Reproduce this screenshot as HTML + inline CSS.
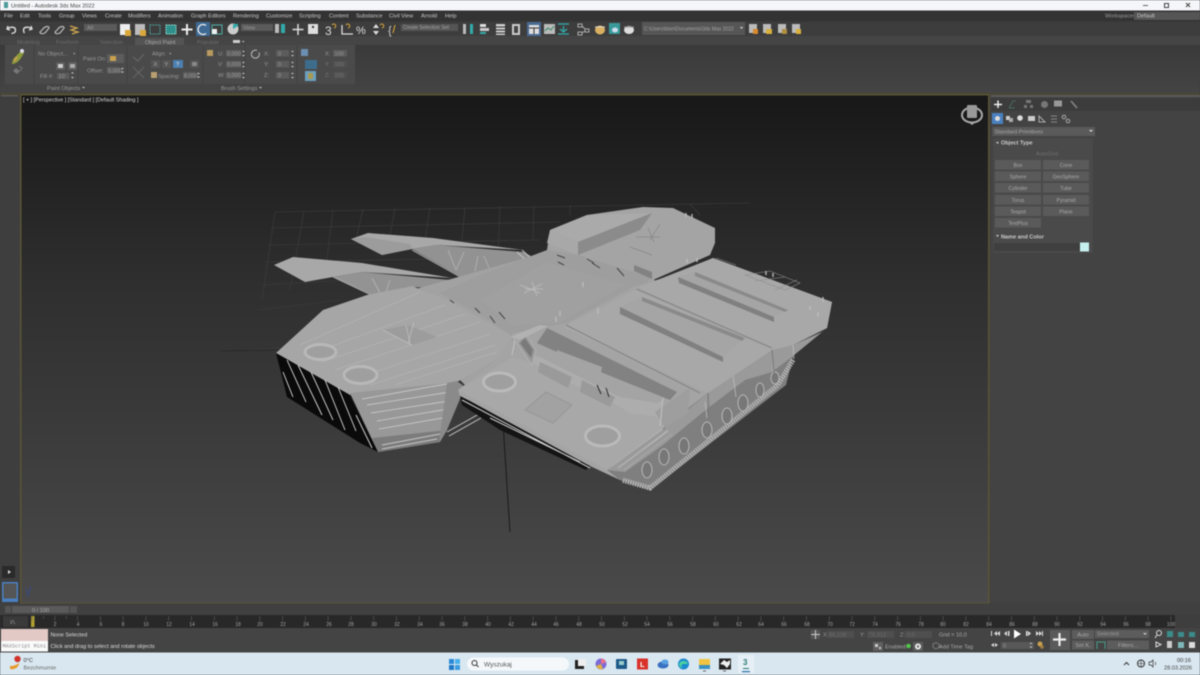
<!DOCTYPE html>
<html><head><meta charset="utf-8"><title>Untitled - Autodesk 3ds Max 2022</title>
<style>
html,body{margin:0;padding:0;width:1200px;height:675px;overflow:hidden;background:#3d3d3d}
svg{display:block;filter:blur(.45px)}
text{font-family:"Liberation Sans",sans-serif;font-size:5.6px;fill:#c8c8c8}
.d{fill:#9a9a9a}.w{fill:#8a8a8a}.t{fill:#a4a4a4;font-size:5px}
.btn{fill:#5a5a5a}.inp{fill:#585858}
.pb text{text-anchor:middle;fill:#aaa;font-size:5.2px}
</style></head><body>
<svg width="1200" height="675" viewBox="0 0 1200 675" xmlns="http://www.w3.org/2000/svg">
<defs>
<linearGradient id="vp" x1="0" y1="0" x2="0" y2="1"><stop offset="0" stop-color="#181818"/><stop offset=".35" stop-color="#2e2e2e"/><stop offset="1" stop-color="#4a4a4a"/></linearGradient>
<linearGradient id="rb" x1="0" y1="0" x2="0" y2="1"><stop offset="0" stop-color="#3a3a3a"/><stop offset="1" stop-color="#444"/></linearGradient>
</defs>
<!-- chrome -->
<rect width="1200" height="675" fill="#3e3e3e"/>
<rect width="1200" height="10.500" fill="#f4f6f9"/>
<rect y="10.500" width="1200" height="11" fill="#333"/>
<rect y="22" width="1200" height="15" fill="#3d3d3d"/>
<rect y="36" width="1200" height="9" fill="#454545"/>
<rect y="45" width="1200" height="48" fill="url(#rb)"/>
<rect y="93" width="1200" height="2" fill="#4a4632"/>
<!-- title -->
<rect x="4" y="2" width="4" height="6" fill="#4d9a9a"/>
<text x="11" y="7.500" style="font-size:5.600px;fill:#444">Untitled - Autodesk 3ds Max 2022</text>
<path d="M1143 5.500h5" stroke="#666" fill="none"/><rect x="1164.500" y="3.500" width="4" height="4" stroke="#444" fill="none"/><path d="M1186 3l4 4M1190 3l-4 4" stroke="#444" fill="none"/>
<!-- menu -->
<g>
<text x="4" y="17.500">File</text><text x="20" y="17.500">Edit</text><text x="38" y="17.500">Tools</text><text x="59" y="17.500">Group</text><text x="82" y="17.500">Views</text><text x="105" y="17.500">Create</text><text x="128" y="17.500">Modifiers</text><text x="158" y="17.500">Animation</text><text x="191" y="17.500">Graph Editors</text><text x="233" y="17.500">Rendering</text><text x="266" y="17.500">Customize</text><text x="299" y="17.500">Scripting</text><text x="329" y="17.500">Content</text><text x="356" y="17.500">Substance</text><text x="389" y="17.500">Civil View</text><text x="421" y="17.500">Arnold</text><text x="445" y="17.500">Help</text>
<text x="1105" y="17.500" class="d">Workspaces:</text><rect x="1134" y="12" width="66" height="8" fill="#555"/><text x="1137" y="17.500">Default</text>
</g>
<!-- toolbar -->
<g fill="none" stroke="#ddd" stroke-width="1.200">
<path d="M8 26l-1 3 3 1M7.500 29c3-3 8-2 8 1s-2 3-4 3.500" stroke-width="1.400"/><path d="M31 26l1 3-3 1M31.500 29c-3-3-8-2-8 1 0 1 0 2 1 3" stroke-width="1.400"/>
<path d="M40 32l3-3c1-2 6-4 6-1l-4 5c-2 1-5 1-5-1z" stroke="#bbb"/><path d="M55 32l3-3c1-2 6-4 6-1l-4 5c-2 1-5 1-5-1z" stroke="#bbb"/>
<path d="M70 26l7 2-6 2 7 2-6 2" stroke="#d0a850"/>
</g>
<rect x="84" y="24" width="33" height="7" fill="#5b5b5b"/><text x="87" y="29.500" class="d">All</text>
<rect x="120" y="24" width="10" height="11" fill="#eee"/><rect x="125" y="30" width="6" height="6" fill="#d9a83c"/>
<rect x="135" y="24" width="10" height="11" fill="#bbb"/><rect x="140" y="30" width="6" height="6" fill="#d9a83c"/>
<rect x="150" y="25" width="10" height="9" fill="none" stroke="#4fb0a8" stroke-dasharray="1.500 1"/>
<rect x="166" y="25" width="10" height="9" fill="#2f8f8a" stroke="#9ed" stroke-dasharray="1.500 1"/>
<path d="M187 24v11M181.500 29.500h11" stroke="#eee" stroke-width="2"/>
<rect x="196" y="22" width="14" height="14" rx="1" fill="#3f6a94"/><path d="M206 25.500a5 5 0 1 0 0 8" stroke="#eee" fill="none" stroke-width="1.300"/>
<rect x="212" y="25" width="10" height="9" fill="none" stroke="#4fb0a8"/><rect x="212" y="29" width="5" height="5" fill="#eee"/>
<circle cx="233" cy="29" r="5.500" fill="#ccc"/><path d="M233 29l5-3v-2l-5 0z" fill="#3aa"/>
<rect x="241" y="24" width="32" height="7" fill="#5b5b5b"/><text x="243" y="29.500" class="d">View</text>
<rect x="275" y="24" width="4" height="9" fill="#bbb"/><rect x="281" y="24" width="4" height="9" fill="#3aa"/>
<path d="M298 24v11M292.500 29.500h11" stroke="#ddd" stroke-width="1.500"/>
<rect x="308" y="24" width="10" height="10" fill="#ddd"/><rect x="312" y="26" width="2" height="2" fill="#333"/>
<text x="325" y="35" style="font-size:12px;fill:#ddd">3</text><path d="M332 25a2 2 0 1 1 2 3" stroke="#d9a83c" fill="none"/>
<path d="M342 25v9h11" stroke="#ddd" fill="none" stroke-width="1.300"/><path d="M346 25a2 2 0 1 1 2 3" stroke="#d9a83c" fill="none"/>
<text x="356" y="34" style="font-size:11px;fill:#ddd">%</text><path d="M376 24l3 4h-6zM376 35l3-4h-6z" fill="#ddd"/><path d="M380 25a2 2 0 1 1 2 3" stroke="#d9a83c" fill="none"/>
<text x="388" y="34" style="font-size:11px;fill:#ccc">{</text><path d="M395 25l-2 8" stroke="#d9a83c" fill="none"/>
<rect x="401" y="24" width="57" height="7" fill="#555"/><text x="403" y="29" class="t">Create Selection Set</text>
<rect x="463" y="24" width="3" height="10" fill="#bbb"/><rect x="470" y="24" width="3" height="10" fill="#3aa"/>
<rect x="480" y="24" width="6" height="3" fill="#ddd"/><rect x="480" y="28" width="9" height="3" fill="#ccc"/><rect x="480" y="32" width="6" height="2" fill="#3aa"/>
<rect x="496" y="24" width="9" height="11" fill="#ccc"/><path d="M496 27h9M496 30h9M496 33h9" stroke="#333"/>
<rect x="512" y="24" width="8" height="11" fill="#ccc"/><rect x="514" y="26" width="4" height="7" fill="#444"/>
<rect x="527" y="22" width="14" height="14" fill="#4a6a94"/><rect x="529" y="25" width="10" height="9" fill="#ddd"/><path d="M529 28h10M534 28v6" stroke="#333"/>
<rect x="544" y="24" width="11" height="10" fill="#bbb"/><path d="M545 31l3-3 3 2 3-4" stroke="#386" fill="none"/>
<path d="M558 24h11M563.500 26v6M560 29l3.500 3 3.500-3M558 34h11" stroke="#3aa" fill="none" stroke-width="1.300"/>
<g fill="none" stroke="#aaa"><rect x="578" y="24" width="4" height="3"/><rect x="585" y="29" width="4" height="3"/><rect x="578" y="32" width="4" height="3"/><path d="M582 26l3 3M582 33l3-2"/></g>
<ellipse cx="600" cy="30" rx="5" ry="4.500" fill="#d9b060"/><path d="M595 27h10" stroke="#ddd"/>
<rect x="609" y="23" width="11" height="11" fill="#3a9a9a"/><ellipse cx="615" cy="30" rx="3" ry="2.500" fill="#cde"/>
<ellipse cx="629" cy="30" rx="5" ry="4" fill="#ddd"/><path d="M624 27h10" stroke="#999"/>
<rect x="642" y="22" width="103" height="13" fill="#565656"/><text x="644" y="30.500" class="t">C:\Users\bion\Documents\3ds Max 2022</text><path d="M740 27h3l-1.500 2z" fill="#ddd"/>
<g><rect x="749" y="24" width="8" height="9" fill="#bbb"/><rect x="753" y="29" width="5" height="5" fill="#d98a2c"/><rect x="763" y="24" width="8" height="9" fill="#bbb"/><rect x="766" y="29" width="6" height="5" fill="#d9b03c"/><rect x="778" y="24" width="8" height="9" fill="#bbb"/><rect x="782" y="29" width="5" height="5" fill="#b09040"/><rect x="792" y="24" width="8" height="9" fill="#bbb"/><rect x="796" y="29" width="5" height="5" fill="#d9b03c"/></g>
<!-- tabs -->
<rect x="135" y="38" width="49" height="7" fill="#545454"/>
<g class="t" style="fill:#777"><text x="17" y="44" style="fill:#6e6e6e">Modeling</text><text x="56" y="44" style="fill:#6e6e6e">Freeform</text><text x="100" y="44" style="fill:#6e6e6e">Selection</text><text x="145" y="44" style="fill:#aaa">Object Paint</text><text x="197" y="44" style="fill:#6e6e6e">Populate</text></g>
<rect x="233" y="40" width="7" height="3" fill="#ccc"/><path d="M242 41h2.500l-1.200 1.500z" fill="#ccc"/>
<!-- ribbon panel -->
<rect x="5" y="45" width="350" height="47" fill="#4a4a4a"/>
<rect x="5" y="84" width="350" height="8" fill="#434343"/>
<path d="M34 46v38M78 46v38M127 46v38M203 46v38M245 46v38M297 46v38" stroke="#3d3d3d" stroke-width=".7"/>
<path d="M22 50l-7 7c-2 2-3 5-3 7 4 0 7-3 9-6l3-5z" fill="#8c9a3c"/><path d="M17 57l-3 4" stroke="#c8a050" stroke-width="2"/><circle cx="22" cy="51" r="2" fill="#dde"/>
<path d="M13 71l3-3 4 3-3 3z" fill="#777"/><path d="M19 66l3 2-2 3" stroke="#777" fill="none"/>
<text x="38" y="55.500" class="d">No Object...</text><path d="M73 53h2.500l-1.200 1.500z" fill="#aaa"/>
<rect x="56" y="62" width="9" height="8" fill="#5c5c5c"/><rect x="68" y="62" width="9" height="8" fill="#5c5c5c"/><rect x="58" y="64" width="5" height="4" fill="#ccc"/><rect x="70" y="64" width="5" height="4" fill="#aaa"/>
<text x="40" y="78" class="d">Fill #:</text><rect x="57" y="73" width="12" height="6" fill="#5c5c5c"/><text x="58.500" y="78" class="d">10</text><path d="M71 73.500h3l-1.500-1.500zM71 77h3l-1.500 1.500z" fill="#ccc"/>
<text x="83" y="60.500" class="d">Paint On:</text><rect x="107" y="54" width="17" height="9" fill="#5c5c5c"/><rect x="110" y="56" width="6" height="5" fill="#c8a050"/>
<text x="87" y="72.500" class="d">Offset:</text><rect x="107" y="67" width="13" height="6.500" fill="#5c5c5c"/><text x="108" y="72.500" class="d">0,000</text><path d="M121 69h3l-1.500-1.500zM121 71.500h3l-1.500 1.500z" fill="#ccc"/>
<path d="M133 57l5 4 6-7" stroke="#666" fill="none" stroke-width="1.200"/><path d="M133 67l11 11M144 67l-11 11" stroke="#666" stroke-width="1"/>
<text x="152" y="55.500" class="d">Align:</text><path d="M169 53h2.500l-1.200 1.500z" fill="#aaa"/>
<rect x="151" y="60" width="9" height="8" fill="#555"/><rect x="162" y="60" width="9" height="8" fill="#555"/><rect x="173" y="60" width="10" height="8" fill="#4d80b0"/><rect x="190" y="60" width="9" height="8" fill="#555"/>
<text x="153.500" y="66" style="fill:#aaa">X</text><text x="164.500" y="66" style="fill:#aaa">Y</text><text x="176" y="66" style="fill:#eee">?</text><rect x="192" y="62" width="5" height="4" fill="#888"/>
<rect x="151" y="72" width="6" height="6" fill="#b8a070"/><text x="158" y="78" class="d">Spacing:</text><rect x="183" y="72" width="13" height="6.500" fill="#5c5c5c"/><text x="184" y="77.500" class="d">8,000</text><path d="M197 74h3l-1.500-1.500zM197 76.500h3l-1.500 1.500z" fill="#ccc"/>
<g class="d">
<rect x="207" y="50" width="6" height="6" fill="#b89a60"/>
<text x="218" y="55.500" class="d">U:</text><rect x="226" y="50" width="15" height="6.500" fill="#5c5c5c"/><text x="227" y="55.500" class="d">0,000</text>
<text x="218" y="66" class="d">V:</text><rect x="226" y="61" width="15" height="6.500" fill="#5c5c5c"/><text x="227" y="66" class="d">0,000</text>
<text x="218" y="77" class="d">W:</text><rect x="226" y="72" width="15" height="6.500" fill="#5c5c5c"/><text x="227" y="77" class="d">0,000</text>
<path d="M242 52h3l-1.500-1.500zM242 55h3l-1.500 1.500zM242 63h3l-1.500-1.500zM242 66h3l-1.500 1.500zM242 74h3l-1.500-1.500zM242 77h3l-1.500 1.500z" fill="#ccc"/>
<path d="M257 50.500a4 4 0 1 0 2 2" stroke="#bbb" fill="none"/>
<text x="264" y="55.500" class="d">X:</text><rect x="276" y="50" width="13" height="6.500" fill="#5c5c5c"/><text x="278" y="55.500" class="d">0</text>
<text x="264" y="66" class="d">Y:</text><rect x="276" y="61" width="13" height="6.500" fill="#5c5c5c"/><text x="278" y="66" class="d">0</text>
<text x="264" y="77" class="d">Z:</text><rect x="276" y="72" width="13" height="6.500" fill="#5c5c5c"/><text x="278" y="77" class="d">0</text>
<path d="M291 52h3l-1.500-1.500zM291 55h3l-1.500 1.500zM291 63h3l-1.500-1.500zM291 66h3l-1.500 1.500zM291 74h3l-1.500-1.500zM291 77h3l-1.500 1.500z" fill="#ccc"/>
<rect x="301" y="49" width="7" height="7" fill="#6b8fb0"/><rect x="305" y="60" width="12" height="9" fill="#3d6c8c"/><rect x="305" y="71" width="11" height="10" fill="#6b9fc0"/><rect x="308" y="73" width="5" height="6" fill="#a89a50"/>
<text x="325" y="55.500" class="d">X:</text><rect x="333" y="50" width="14" height="6.500" fill="#5c5c5c"/><text x="334.500" y="55.500" class="d">100</text>
<text x="325" y="66" class="d" style="fill:#777">Y:</text><rect x="333" y="61" width="14" height="6.500" fill="#505050"/><text x="334.500" y="66" style="fill:#777">100</text>
<text x="325" y="77" class="d" style="fill:#777">Z:</text><rect x="333" y="72" width="14" height="6.500" fill="#505050"/><text x="334.500" y="77" style="fill:#777">100</text>
</g>
<text x="47" y="90" class="d">Paint Objects</text><path d="M82 87h3l-1.500 1.500z" fill="#ccc"/>
<text x="221" y="90" class="d">Brush Settings</text><path d="M259 87h3l-1.500 1.500z" fill="#ccc"/>
<!-- left bar -->
<rect x="0" y="95" width="20" height="508" fill="#3e3e3e"/><rect x="1" y="95" width="17" height="1.500" fill="#5a5a5a"/>
<rect x="2" y="566" width="13" height="12" fill="#2a2a2a"/><path d="M8 570l3 2-3 2z" fill="#ddd"/>
<rect x="2" y="582" width="16" height="20" fill="#4a80c0"/><rect x="3.500" y="583.500" width="13" height="15" fill="#555"/>
<!-- viewport -->
<rect x="20" y="94" width="969.500" height="509.500" fill="#5a5436"/>
<rect x="21.500" y="95.500" width="966.500" height="507" fill="url(#vp)"/>
<text x="23" y="101.500" style="font-size:5.400px;fill:#ddd">[ + ] [Perspective ] [Standard ] [Default Shading ]</text>
<path d="M26 588l2 8M31 586l-3 10" stroke="#3a4a80" fill="none"/>
<!-- grid -->
<g stroke="#3f3f3f" stroke-width=".6" fill="none">
<path d="M275 212L750 203M271 228L560 222M268 245L540 240M265 262L500 258M262 285L350 280M258 310L340 300M250 350L280 348"/>
<path d="M275 212L262 300M304 211L290 290M333 210L325 275M363 209L356 240M395 208L390 235M430 207L425 240M465 207L462 240M500 206L498 260M534 206L533 240M570 205L570 215M690 204L700 215"/>
</g>
<path d="M503 423L510 532" stroke="#111" stroke-width=".8"/>
<path d="M220 351L280 350" stroke="#222" stroke-width=".6"/>
<!-- viewcube -->
<ellipse cx="972" cy="115" rx="10" ry="7.500" fill="none" stroke="#aaa" stroke-width="2"/>
<rect x="967" y="105" width="10" height="13" rx="1" fill="#999"/>
<path d="M970 123.500l2 1.500 2-1.500z" fill="#aaa"/>
<!-- MODEL -->
<!-- wing rear -->
<polygon points="412,249 437,245 523,252 535,258 530,270 493,272 473,278 463,278" fill="#929292"/>
<polygon points="351,239 368,233 433,238 523,250 437,245 412,249 382,255" fill="#a8a8a8"/>
<polygon points="351,239 382,255 412,249 410,244 365,237" fill="#9c9c9c"/>
<path d="M448 250l8 20M456 270l8-18M478 256l-3 15M484 256l6 14M412 250l50 28" stroke="#b2b2b2" stroke-width=".9" fill="none"/>
<!-- wing front -->
<polygon points="333,277 362,272 450,280 470,280 448,288 407,287 372,295" fill="#939393"/>
<polygon points="274,265 293,257 362,263 452,278 362,272 333,277 305,282" fill="#a8a8a8"/>
<path d="M372 278l8 15M390 280l-4 12M333,277l38 18" stroke="#b2b2b2" stroke-width=".9" fill="none"/>
<path d="M452 279l10 8M447 280l10 8M522 250l10 9M517 252l10 9" stroke="#c5c5c5" stroke-width="1" fill="none"/>
<!-- interior base fills gaps between parts -->
<polygon points="412,290 547,252 653,275 660,300 560,345 510,375 470,390 440,360" fill="#a2a2a2"/>
<!-- rear plate -->
<polygon points="547,250 550,230 587,215 643,207 673,208 715,228 715,243 710,255 653,280 600,290" fill="#a4a4a4"/>
<polygon points="550,230 587,215 651,213 578,242" fill="#aaaaaa"/>
<polygon points="578,242 652,213 640,230 578,255" fill="#8b8b8b"/>
<polygon points="550,230 578,242 578,255 547,243" fill="#a8a8a8"/>
<path d="M648 228l6 14M660 224l-10 16M636 237h24M630 247l22 8" stroke="#858585" stroke-width=".7" fill="none"/>
<!-- center deck -->
<polygon points="440,293 473,278 547,250 578,255 653,278 600,310 563,327 513,340 490,320" fill="#9e9e9e"/>
<polygon points="480,300 547,262 625,285 560,322 513,325" fill="#a0a0a0"/>
<path d="M520 285l20 8M524 293l18-9M532 282l5 14M525 289h18" stroke="#bdbdbd" stroke-width=".8" fill="none"/>
<path d="M557 255l8 3M558 262l6 3M587 259l7 4M592 263l8 5M617 268l7 8M450 300l4 3M475 308l5 5M490 316l5 7M499 312l6 7" stroke="#444" stroke-width="1" fill="none"/>
<polygon points="634,265 652,272 652,279 634,271" fill="#828282"/>
<!-- left hull -->
<polygon points="276,353 323,310 367,295 412,286 447,300 508,333 520,345 490,363 457,382 350,395" fill="#a6a6a6"/>
<g stroke="#b4b4b4" stroke-width=".7" fill="none">
<path d="M300 345L420 292M310 354L445 305M322 362L465 314M335 370L480 322M350 380L490 334M370 385L495 345M395 385L497 352"/>
</g>
<polygon points="383,330 408,325 437,337 412,345" fill="#9c9c9c"/>
<path d="M406 325l4 18M414 322l-6 22M383 330l29 15" stroke="#bdbdbd" stroke-width=".8" fill="none"/>
<polygon points="350,393 457,382 447,430 440,442 378,452" fill="#989898"/>
<polygon points="378,452 440,442 447,430 372,438" fill="#7c7c7c"/>
<path d="M362 399L452 383M367 405L450 392M371 413L449 401M377 421L448 409M379 429L448 417M382 445L440 434M382 449L437 439" stroke="#c6c6c6" stroke-width=".9" fill="none"/>
<polygon points="276,353 350,395 378,452 360,443 287,397" fill="#0a0a0a"/>
<path d="M287 360l19 42M298 365l24 50M311 372l22 48M325 380l20 50M338 387l18 44M356 415l16 33M283 372l10 25" stroke="#d8d8d8" stroke-width=".9" fill="none"/>
<ellipse cx="320.500" cy="352" rx="15.500" ry="7.500" fill="#9f9f9f" stroke="#b8b8b8" stroke-width="3"/>
<ellipse cx="360.500" cy="375" rx="16.500" ry="8.500" fill="#9f9f9f" stroke="#b8b8b8" stroke-width="3"/>
<path d="M447 383l10-2 8 6 -18 43-8 12z" fill="#8a8a8a"/>
<path d="M447 432l32-18M449 436l32-18" stroke="#c8c8c8" stroke-width="1" fill="none"/>
<!-- tank silhouette base -->
<polygon points="458,390 497,360 513,333 567,323 633,287 683,272 713,258 832,302 827,328 793,345 793,357 783,387 650,490 620,480 590,466 500,423 460,397" fill="#a4a4a4"/>
<!-- tank tracks -->
<polygon points="607,470 708,393 772,350 793,357 786,385 650,490 620,480" fill="#7f7f7f"/>
<path d="M793 360L778 385 650 488 622 480" stroke="#b4b4b4" stroke-width="5" stroke-dasharray="1.500 1" fill="none"/>
<g fill="#777" stroke="#b6b6b6" stroke-width="1"><ellipse cx="647" cy="470" rx="5" ry="8"/><ellipse cx="664" cy="457" rx="5" ry="8"/><ellipse cx="684" cy="446" rx="5" ry="8"/><ellipse cx="707" cy="430" rx="5" ry="8"/><ellipse cx="727" cy="416" rx="5" ry="8"/><ellipse cx="743" cy="403" rx="5" ry="8"/><ellipse cx="760" cy="390" rx="4" ry="7"/><ellipse cx="775" cy="378" rx="4" ry="6"/></g>
<!-- tank underside -->
<polygon points="460,396 470,401 590,466 586,470 500,430 462,405" fill="#141414"/>
<path d="M462 400l128 68M490 418l90 44" stroke="#ccc" stroke-width="1" fill="none"/>
<!-- side armour -->
<polygon points="607,470 663,430 708,393 772,350 793,345 822,332 827,328 793,356 772,372 745,380 708,408 663,445 625,472" fill="#9a9a9a"/>
<path d="M612 465l52-38M618 468l50-37M705 402l2 16M733 375l3 22M772 352l1 20M793 345l1 14" stroke="#bcbcbc" stroke-width=".8" fill="none"/>
<path d="M708 393l1 26M772 350l2 24" stroke="#7a7a7a" stroke-width="1.200" fill="none"/>
<!-- tank decks -->
<polygon points="563,327 635,290 772,350 708,393" fill="#a8a8a8"/>
<polygon points="637,288 713,258 832,302 827,328 793,345 772,350" fill="#a8a8a8"/>
<polygon points="620,307 642,297 745,338 723,357" fill="#a5a5a5"/>
<polygon points="620,307 620,314 723,362 723,357" fill="#808080"/>
<polygon points="642,297 745,338 742,341 642,301" fill="#8a8a8a"/>
<polygon points="678,277 695,272 788,310 774,317" fill="#a5a5a5"/>
<polygon points="678,277 679,283 774,322 774,317" fill="#808080"/>
<polygon points="695,272 788,310 785,312 695,276" fill="#8a8a8a"/>
<path d="M716 258l20 7M755 281l30-4M775 290l22-10M745 275l40 15 15-7-30-12z" fill="none" stroke="#8e8e8e" stroke-width=".6"/>
<path d="M566 325L700 393M637 289L772 348" stroke="#858585" stroke-width="1.100" fill="none"/>
<!-- cockpit -->
<polygon points="547,328 677,392 670,400 603,373 557,352 537,343" fill="#828282"/>
<polygon points="557,350 602,367 600,377 557,357" fill="#a4a4a4"/>
<!-- glacis -->
<polygon points="458,390 513,357 533,363 663,417 663,430 607,470" fill="#a8a8a8"/>
<polygon points="532,355 540,357 620,397 657,403 663,400 658,417 630,413 613,403 570,383 533,363" fill="#adadad"/>
<polygon points="540,362 572,377 568,388 538,372" fill="#9a9a9a"/>
<polygon points="582,380 615,397 610,407 580,392" fill="#9a9a9a"/>
<path d="M597 385l4 9M606 388l3 9" stroke="#2a2a2a" fill="none"/>
<polygon points="517,343 525,333 536,350 532,365" fill="#9a9a9a" stroke="#b5b5b5" stroke-width=".8"/>
<polygon points="520,343 525,338 533,350 531,358" fill="#7a7a7a"/>
<polygon points="510,337 540,325 548,326 520,340" fill="#b2b2b2"/>
<polygon points="655,412 690,388 688,413 665,428" fill="#9e9e9e"/>
<path d="M663 398l-3 28M515 340l-3 15" stroke="#bdbdbd" stroke-width="1.200" fill="none"/>
<ellipse cx="499.500" cy="382" rx="16" ry="9" fill="#9f9f9f" stroke="#bababa" stroke-width="3"/>
<ellipse cx="602.500" cy="436" rx="17" ry="10" fill="#9f9f9f" stroke="#bababa" stroke-width="3"/>
<polygon points="525,410 546,392 572,405 553,423" fill="#a2a2a2" stroke="#8e8e8e" stroke-width=".6"/>
<path d="M612 466l50-37M618 468l50-38M624 470l48-36" stroke="#bbb" stroke-width=".6" opacity=".7" fill="none"/>
<!-- pins -->
<path d="M686 213v4M692 214v4M687 259v4M697 258v4M766 271v4M773 273v4M818 312v5M810 306v4M823 297v5M583 282v5M560 311v5M598 308v6M556 317v5" stroke="#bdbdbd" stroke-width="1.300" fill="none"/>
<!-- right panel -->
<rect x="990" y="95" width="210" height="508" fill="#434343"/>
<rect x="991" y="95" width="209" height="2" fill="#5a5a5a"/>
<rect x="991" y="98" width="209" height="13" fill="#3c3c3c"/>
<path d="M998 100.500v7.500M994 104.500h8" stroke="#eee" stroke-width="1.500"/>
<path d="M1009 108l4-7h3M1009 108h6" stroke="#4a6a5c" fill="none"/>
<rect x="1026" y="100" width="5" height="3" fill="#777"/><rect x="1024" y="105" width="3" height="3" fill="#777"/><rect x="1030" y="105" width="3" height="3" fill="#777"/>
<circle cx="1044.500" cy="104.500" r="3.500" fill="#777"/><rect x="1054" y="100.500" width="8" height="6" fill="#999"/><path d="M1071 101l6 7" stroke="#888" stroke-width="1.500"/>
<rect x="992" y="113" width="11" height="11" fill="#4a80c0"/><circle cx="997.500" cy="118.500" r="2.500" fill="#ddd"/>
<rect x="1006" y="116" width="4" height="4" fill="#ccc"/><rect x="1009" y="118" width="4" height="4" fill="#aaa"/><circle cx="1020" cy="118" r="2.800" fill="#ddd"/><rect x="1028" y="116" width="7" height="5" fill="#ccc"/><path d="M1039 122h6l-6-6z" fill="none" stroke="#aaa"/><path d="M1051 116h6M1051 119h6M1051 122h6" stroke="#888"/><circle cx="1064" cy="117" r="1.800" fill="none" stroke="#aaa"/><circle cx="1068" cy="121" r="1.800" fill="none" stroke="#aaa"/>
<rect x="992.500" y="127" width="102.500" height="9" fill="#5a5a5a"/><text x="994.500" y="133.500" style="fill:#a8a8a8">Standard Primitives</text><path d="M1089 130h4l-2 2z" fill="#ddd"/>
<rect x="993" y="138" width="100" height="101" fill="#4a4a4a"/><rect x="993" y="232" width="100" height="21" fill="#4a4a4a"/>
<path d="M996 142h3l-1.500 2z" fill="#ccc"/><text x="1001" y="144.500" style="font-weight:bold;fill:#ccc">Object Type</text>
<text x="1036" y="155.500" style="fill:#6f6f6f">AutoGrid</text>
<g class="pb">
<rect x="995" y="160" width="46" height="9.500" class="btn"/><rect x="1043" y="160" width="46" height="9.500" class="btn"/><text x="1018" y="167">Box</text><text x="1066" y="167">Cone</text>
<rect x="995" y="171.500" width="46" height="9.500" class="btn"/><rect x="1043" y="171.500" width="46" height="9.500" class="btn"/><text x="1018" y="178.500">Sphere</text><text x="1066" y="178.500">GeoSphere</text>
<rect x="995" y="183" width="46" height="9.500" class="btn"/><rect x="1043" y="183" width="46" height="9.500" class="btn"/><text x="1018" y="190">Cylinder</text><text x="1066" y="190">Tube</text>
<rect x="995" y="195" width="46" height="9.500" class="btn"/><rect x="1043" y="195" width="46" height="9.500" class="btn"/><text x="1018" y="202">Torus</text><text x="1066" y="202">Pyramid</text>
<rect x="995" y="206.500" width="46" height="9.500" class="btn"/><rect x="1043" y="206.500" width="46" height="9.500" class="btn"/><text x="1018" y="213.500">Teapot</text><text x="1066" y="213.500">Plane</text>
<rect x="995" y="218" width="46" height="9.500" class="btn"/><text x="1018" y="225">TextPlus</text>
</g>
<path d="M996 235h3l-1.500 2z" fill="#ccc"/><text x="1001" y="238.500" style="font-weight:bold;fill:#ccc">Name and Color</text>
<rect x="994" y="243" width="86" height="8" fill="#3f3f3f"/><rect x="1080" y="242.500" width="9" height="9" fill="#c6f0f0"/>
<!-- time slider -->
<rect y="603.500" width="1200" height="11.500" fill="#404040"/>
<rect x="5" y="606" width="6" height="7" fill="#555"/><rect x="12" y="606" width="57" height="7" fill="#5a5a5a"/><rect x="70" y="606" width="7" height="7" fill="#555"/>
<text x="32" y="612" style="fill:#aaa">0 / 100</text>
<!-- timeline -->
<rect y="615" width="1175" height="13" fill="#282828"/><rect x="3" y="616" width="25" height="11" fill="#3a3a3a"/>
<text x="10" y="624" class="d">I/\.</text>
<rect x="31" y="616" width="3.500" height="11" fill="#b0a030"/>
<path d="M32 616v5M43.400 616v3M54.800 616v5M66.200 616v3M77.600 616v5M100.400 616v5M123.100 616v5M145.900 616v5M168.700 616v5M191.500 616v5M214.300 616v5M237 616v5M259.800 616v5M282.600 616v5M305.400 616v5M328.100 616v5M350.900 616v5M373.700 616v5M396.500 616v5M419.300 616v5M442 616v5M464.800 616v5M487.600 616v5M510.400 616v5M533.100 616v5M555.900 616v5M578.700 616v5M601.500 616v5M624.300 616v5M647 616v5M669.800 616v5M692.600 616v5M715.400 616v5M738.100 616v5M760.900 616v5M783.700 616v5M806.500 616v5M829.300 616v5M852 616v5M874.800 616v5M897.600 616v5M920.400 616v5M943.100 616v5M965.900 616v5M988.700 616v5M1011.500 616v5M1034.300 616v5M1057 616v5M1079.800 616v5M1102.600 616v5M1125.400 616v5M1148.100 616v5M1170.900 616v5" stroke="#5c5c5c" stroke-width=".6" fill="none"/>
<g style="text-anchor:middle"><text x="55" y="626" class="t">2</text><text x="78" y="626" class="t">4</text><text x="101" y="626" class="t">6</text><text x="123" y="626" class="t">8</text><text x="146" y="626" class="t">10</text><text x="169" y="626" class="t">12</text><text x="192" y="626" class="t">14</text><text x="215" y="626" class="t">16</text><text x="238" y="626" class="t">18</text><text x="260" y="626" class="t">20</text><text x="283" y="626" class="t">22</text><text x="306" y="626" class="t">24</text><text x="329" y="626" class="t">26</text><text x="351" y="626" class="t">28</text><text x="374" y="626" class="t">30</text><text x="397" y="626" class="t">32</text><text x="420" y="626" class="t">34</text><text x="442" y="626" class="t">36</text><text x="465" y="626" class="t">38</text><text x="488" y="626" class="t">40</text><text x="511" y="626" class="t">42</text><text x="534" y="626" class="t">44</text><text x="556" y="626" class="t">46</text><text x="579" y="626" class="t">48</text><text x="602" y="626" class="t">50</text><text x="625" y="626" class="t">52</text><text x="647" y="626" class="t">54</text><text x="670" y="626" class="t">56</text><text x="693" y="626" class="t">58</text><text x="716" y="626" class="t">60</text><text x="739" y="626" class="t">62</text><text x="761" y="626" class="t">64</text><text x="784" y="626" class="t">66</text><text x="807" y="626" class="t">68</text><text x="830" y="626" class="t">70</text><text x="852" y="626" class="t">72</text><text x="875" y="626" class="t">74</text><text x="898" y="626" class="t">76</text><text x="921" y="626" class="t">78</text><text x="943" y="626" class="t">80</text><text x="966" y="626" class="t">82</text><text x="989" y="626" class="t">84</text><text x="1012" y="626" class="t">86</text><text x="1035" y="626" class="t">88</text><text x="1057" y="626" class="t">90</text><text x="1080" y="626" class="t">92</text><text x="1103" y="626" class="t">94</text><text x="1126" y="626" class="t">96</text><text x="1148" y="626" class="t">98</text><text x="1171" y="626" class="t">100</text></g>
<!-- status -->
<rect y="628" width="1200" height="24.500" fill="#444"/>
<rect x="1" y="629" width="47" height="12" fill="#e2c9c6"/><rect x="1" y="641" width="47" height="10.500" fill="#fafafa"/>
<text x="2.500" y="647.500" style="font-family:'Liberation Mono',monospace;font-size:5.200px;fill:#888">MAXScript Mini</text>
<text x="50.500" y="636.500" style="fill:#ddd">None Selected</text>
<text x="50.500" y="648" style="fill:#ddd">Click and drag to select and rotate objects</text>
<rect x="811" y="630" width="9" height="9" fill="#555"/><path d="M815.500 630v9M811 634.500h9" stroke="#ccc" fill="none"/>
<text x="823" y="636.500" class="d">X:</text><rect x="827" y="631" width="27" height="7" fill="#4f4f4f"/><text x="829" y="636.500" style="fill:#6c6c6c">86,138</text>
<text x="860" y="636.500" class="d">Y:</text><rect x="867" y="631" width="27" height="7" fill="#4f4f4f"/><text x="869" y="636.500" style="fill:#6c6c6c">76,313</text>
<text x="900" y="636.500" class="d">Z:</text><rect x="905" y="631" width="27" height="7" fill="#4f4f4f"/><text x="907" y="636.500" style="fill:#6c6c6c">0,0</text>
<text x="939" y="636.500" style="fill:#aaa">Grid = 10,0</text>
<rect x="873" y="642" width="10" height="9" fill="#606060"/><rect x="875" y="644" width="3" height="3" fill="#ccc"/><rect x="879" y="647" width="2" height="2" fill="#ccc"/>
<text x="885" y="648.500" style="fill:#aaa">Enabled:</text><circle cx="908.500" cy="646" r="2.300" fill="#52c44a"/>
<rect x="913" y="642" width="10" height="9" fill="#5c5c5c"/><circle cx="918" cy="646.500" r="3" fill="#eee"/><circle cx="918" cy="646.500" r="1.200" fill="#666"/>
<path d="M933 644l3-1.500 3 1.500v3.500l-3 1.500-3-1.500z" fill="none" stroke="#777"/><text x="939" y="648.500" style="fill:#aaa">Add Time Tag</text>
<g fill="#ddd"><path d="M991 631v5h1v-5zM994 633.500l3-2.500v5zM997 633.500l-.5 0zM1000 631l-3 2.500 3 2.500zM1007 631l-3 2.500 3 2.500zM1008 631h1.500v5h-1.500z"/><path d="M1014 629.500l7 4.500-7 4.500z" fill="#fff"/><path d="M1026 631h1.500v5H1026zM1028 631l3 2.500-3 2.500zM1039 631l3 2.500-3 2.500zM1036 631l3 2.500-3 2.500zM1042 631h1v5h-1z"/><path d="M991 645l3-2v4zM998 645l-3-2v4z"/></g>
<rect x="1001" y="642" width="33" height="7" fill="#585858"/><text x="1003" y="647.500" class="d">0</text><path d="M1029.500 644h3l-1.500-1.500zM1029.500 646.500h3l-1.500 1.500z" fill="#ccc"/>
<circle cx="1040" cy="644" r="2.500" fill="#c8a050"/><circle cx="1042" cy="647" r="1.800" fill="#a08040"/>
<rect x="1050" y="630" width="20" height="20" fill="#5a5a5a"/><path d="M1059.500 633v13M1053 639.500h13" stroke="#eee" stroke-width="2.200"/>
<rect x="1072" y="630" width="22" height="9" fill="#5c5c5c"/><text x="1083" y="636.500" style="text-anchor:middle;fill:#aaa">Auto</text>
<rect x="1072" y="640.500" width="22" height="9" fill="#5c5c5c"/><text x="1083" y="647" style="text-anchor:middle;fill:#aaa">Set K.</text>
<rect x="1095" y="630" width="54" height="8" fill="#5c5c5c"/><text x="1097" y="635.500" class="d">Selected</text><path d="M1143 633h4l-2 2z" fill="#ccc"/>
<path d="M1097 649v-7h8v7" fill="none" stroke="#4a9a88"/><rect x="1107" y="640.500" width="42" height="9" fill="#5c5c5c"/><text x="1128" y="647" style="text-anchor:middle;fill:#aaa">Filters...</text>
<circle cx="1159" cy="633" r="2.500" fill="none" stroke="#ddd"/><path d="M1157 635l-2 3" stroke="#ddd"/><rect x="1167" y="631" width="6" height="6" fill="#3d8c8c"/><rect x="1178" y="632" width="6" height="5" fill="#3d8c8c"/><rect x="1189" y="632" width="6" height="5" fill="#3d8c8c"/>
<path d="M1156 642l5 2.500-5 2.500z" fill="none" stroke="#ddd"/><rect x="1167" y="641" width="5" height="7" fill="#ccc"/><rect x="1178" y="642" width="6" height="6" fill="#7fb8b8"/><rect x="1189" y="642" width="6" height="6" fill="#ddd"/>
<!-- taskbar -->
<rect y="652.500" width="1200" height="22.500" fill="#d9e7f0"/>
<path d="M10 669c5 1 9-2 9-6-3 2-5 3-9 3z" fill="#e89a2c"/><circle cx="17.500" cy="659" r="3.200" fill="#d0342c"/><text x="23.500" y="662" style="fill:#333">0°C</text><text x="23.500" y="669.500" style="fill:#666">Bezchmurnie</text>
<rect x="449" y="659" width="5" height="5" fill="#2b8ad8"/><rect x="455" y="659" width="5" height="5" fill="#4ab0ec"/><rect x="449" y="665" width="5" height="5" fill="#1e78c8"/><rect x="455" y="665" width="5" height="5" fill="#3a9ce0"/>
<rect x="467" y="657.500" width="102" height="13" rx="6.500" fill="#f4f8fb"/><circle cx="474.500" cy="663" r="2.500" fill="none" stroke="#333"/><path d="M476.500 665l2 2" stroke="#333"/><text x="484" y="666.500" style="fill:#555;font-size:6.500px">Wyszukaj</text>
<rect x="575" y="660" width="9" height="9" fill="#222"/><rect x="578" y="659" width="8" height="7" fill="#eee"/>
<circle cx="601" cy="664" r="5.500" fill="#7a6ad8"/><path d="M601 658.500a5.500 5.500 0 0 1 5 4l-5 1.500z" fill="#e8708a"/><path d="M596 666a5.500 5.500 0 0 0 7 3l-2-5z" fill="#e0b040"/>
<rect x="616" y="659" width="11" height="10" rx="1" fill="#1e5a88"/><rect x="619" y="661" width="5" height="4" fill="#9cc"/>
<rect x="637" y="658.500" width="11" height="11" fill="#d8322a"/><text x="640" y="667" style="fill:#fff;font-weight:bold;font-size:7.500px">L</text>
<ellipse cx="663" cy="665" rx="5.500" ry="3.500" fill="#3a70c0"/><ellipse cx="665" cy="662" rx="3.500" ry="2.500" fill="#58a0e0"/>
<circle cx="683.500" cy="664" r="5.500" fill="#1a8ad0"/><path d="M679 664c1-4 8-4 9 0h-5c-2 0-2 3 0 4-2 0-4-2-4-4z" fill="#4cd0a0"/>
<rect x="699" y="659" width="11" height="10" fill="#f0c440"/><rect x="699" y="665" width="11" height="4" fill="#3a90c0"/><rect x="703" y="670.500" width="3" height="1" fill="#666"/>
<rect x="719" y="658.500" width="12" height="11" fill="#222"/><path d="M720 664l4-4 3 2 3-2v4l-3 4-3-3z" fill="#eee"/><rect x="723" y="670.500" width="3" height="1" fill="#666"/>
<rect x="738" y="655" width="16" height="18" fill="#e6eff5"/><text x="743" y="665" style="font-size:8px;fill:#2a7a70;font-weight:bold">3</text><rect x="743" y="668" width="6" height="1" fill="#2a7a70"/><rect x="742" y="671" width="8" height="1.200" fill="#2a70b0"/>
<path d="M1124 665l2.500-2.500 2.500 2.500" stroke="#333" fill="none"/>
<circle cx="1141" cy="663.500" r="3.500" fill="none" stroke="#333"/><path d="M1137.500 663.500h7M1141 660v7" stroke="#333" stroke-width=".6"/>
<path d="M1149 662h2l2-2v7l-2-2h-2z" fill="none" stroke="#333" stroke-width=".7"/><path d="M1155 662c1 1 1 2 0 3" stroke="#333" fill="none" stroke-width=".6"/>
<text x="1177" y="662" style="fill:#333">00:16</text><text x="1164" y="669.500" style="fill:#444">28.03.2026</text>
</svg>
</body></html>
